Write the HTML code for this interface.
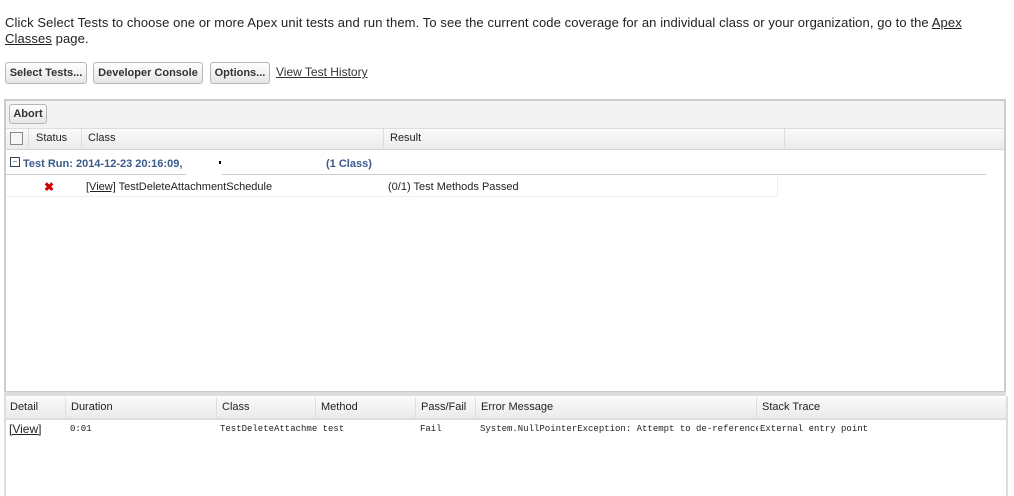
<html><head><style>
body{margin:0;width:1014px;height:494px;overflow:hidden;background:#fff;font-family:"Liberation Sans",Arial,sans-serif;font-size:13px;color:#222;position:relative}
.a{position:absolute}
.btn{position:absolute;top:62px;height:20px;border:1px solid #b5b5b5;border-radius:3px;background:linear-gradient(#fff,#e6e6e6);font-weight:bold;font-size:11px;line-height:20px;text-align:center;color:#333}
u{text-decoration:underline}
.hdr{background:linear-gradient(#fafafa,#ebebeb);border-bottom:1px solid #d4d4d4}
.sm{font-size:11px}
.mono{font-family:"Liberation Mono",monospace;font-size:9px}
</style></head><body>
<div class="a" style="left:5px;top:15px;line-height:16px;width:1000px;letter-spacing:0.1px">Click Select Tests to choose one or more Apex unit tests and run them. To see the current code coverage for an individual class or your organization, go to the <u>Apex<br>Classes</u> page.</div>
<div class="btn" style="left:5px;width:80px">Select Tests...</div>
<div class="btn" style="left:93px;width:108px">Developer Console</div>
<div class="btn" style="left:210px;width:58px">Options...</div>
<div class="a" style="left:276px;top:65px;font-size:12px;color:#333"><u>View Test History</u></div>
<div class="a" style="left:4px;top:99px;width:998px;height:290px;border:2px solid #ccc;background:#fff"></div>
<div class="a" style="left:6px;top:101px;width:998px;height:27px;background:#f3f3f3"></div>
<div class="btn" style="left:9px;top:104px;width:36px;height:18px;line-height:18px">Abort</div>
<div class="a hdr" style="left:6px;top:128px;width:998px;height:20px;border-top:1px solid #ddd"></div>
<div class="a" style="left:10px;top:132px;width:11px;height:11px;border:1px solid #888;background:#f5f5f5"></div>
<div class="a sm" style="left:28px;top:128px;height:20px;border-left:1px solid #ddd;padding-left:7px;line-height:21px">Status</div>
<div class="a sm" style="left:81px;top:128px;height:20px;border-left:1px solid #ddd;padding-left:6px;line-height:21px">Class</div>
<div class="a sm" style="left:383px;top:128px;height:20px;border-left:1px solid #ddd;padding-left:6px;line-height:21px">Result</div>
<div class="a" style="left:784px;top:128px;height:20px;border-left:1px solid #ddd"></div>
<div class="a" style="left:10px;top:157px;width:8px;height:8px;border:1px solid #345;font-size:8px;line-height:8px;text-align:center;color:#345">−</div>
<div class="a" style="left:23px;top:158px;font-size:11px;font-weight:bold;color:#3a5a8a">Test Run: 2014-12-23 20:16:09,</div>
<div class="a" style="left:326px;top:158px;font-size:11px;font-weight:bold;color:#3a5a8a">(1 Class)</div>
<div class="a" style="left:219px;top:161px;width:2px;height:3px;background:#000"></div>
<div class="a" style="left:6px;top:174px;width:180px;border-top:1px solid #ccc"></div>
<div class="a" style="left:222px;top:174px;width:764px;border-top:1px solid #ccc"></div>
<div class="a" style="left:6px;top:177px;width:771px;height:19px;border-right:1px solid #eee;border-bottom:1px solid #eee"></div>
<div class="a" style="left:44px;top:180px;color:#c00;font-weight:bold;font-size:12px">✖</div>
<div class="a sm" style="left:86px;top:181px"><u>[View]</u> TestDeleteAttachmentSchedule</div>
<div class="a sm" style="left:388px;top:181px">(0/1) Test Methods Passed</div>
<div class="a" style="left:4px;top:392px;width:1002px;height:4px;background:#ddd"></div>
<div class="a" style="left:4px;top:396px;width:1000px;height:100px;border-left:2px solid #ddd;border-right:2px solid #ddd"></div>
<div class="a hdr" style="left:6px;top:397px;width:1000px;height:21px;border-bottom:2px solid #ddd"></div>
<div class="a sm" style="left:10px;top:401px">Detail</div>
<div class="a sm" style="left:65px;top:397px;height:21px;border-left:1px solid #ddd;padding-left:5px;line-height:21px">Duration</div>
<div class="a sm" style="left:216px;top:397px;height:21px;border-left:1px solid #ddd;padding-left:5px;line-height:21px">Class</div>
<div class="a sm" style="left:315px;top:397px;height:21px;border-left:1px solid #ddd;padding-left:5px;line-height:21px">Method</div>
<div class="a sm" style="left:415px;top:397px;height:21px;border-left:1px solid #ddd;padding-left:5px;line-height:21px">Pass/Fail</div>
<div class="a sm" style="left:475px;top:397px;height:21px;border-left:1px solid #ddd;padding-left:5px;line-height:21px">Error Message</div>
<div class="a sm" style="left:756px;top:397px;height:21px;border-left:1px solid #ddd;padding-left:5px;line-height:21px">Stack Trace</div>
<div class="a" style="left:9px;top:422px;font-size:12px"><u>[View]</u></div>
<div class="a mono" style="left:70px;top:424px">0:01</div>
<div class="a mono" style="left:220px;top:424px">TestDeleteAttachme test</div>
<div class="a mono" style="left:420px;top:424px">Fail</div>
<div class="a mono" style="left:480px;top:424px;width:278px;overflow:hidden;white-space:nowrap">System.NullPointerException: Attempt to de-reference</div>
<div class="a mono" style="left:760px;top:424px">External entry point</div>
</body></html>
